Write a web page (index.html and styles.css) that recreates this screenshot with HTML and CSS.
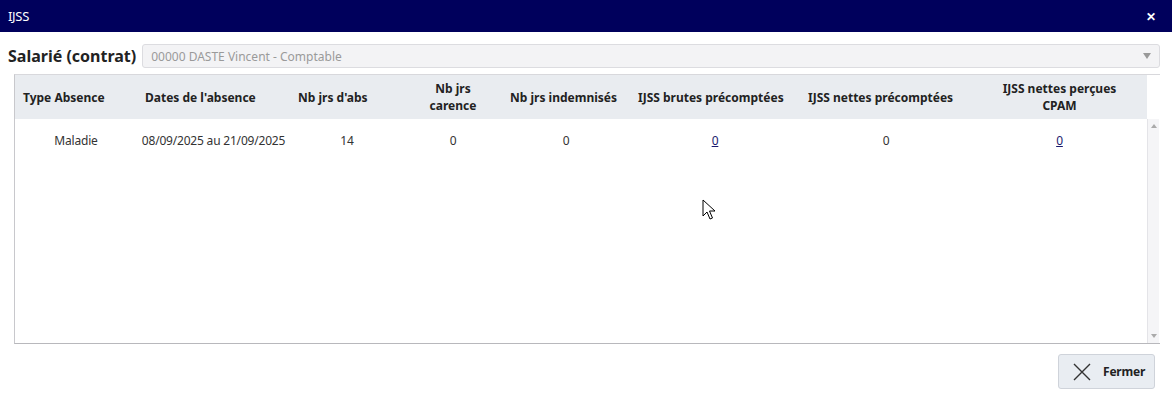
FILE: index.html
```html
<!DOCTYPE html>
<html lang="fr">
<head>
    <meta charset="UTF-8">
    <title>IJSS</title>
    <link rel="stylesheet" href="styles.css">
</head>
<body>
    <div class="dialog">
        <div class="titlebar">
            <span class="title">IJSS</span>
            <span class="close">&#x2715;</span>
        </div>

        <div class="content">
            <div class="field-row">
                <label class="field-label">Salarié (contrat)</label>
                <div class="select">
                    <span>00000 DASTE Vincent - Comptable</span>
                    <span class="select-arrow"></span>
                </div>
            </div>

            <div class="grid-frame">
                <table class="grid">
                    <colgroup>
                        <col style="width: 122px">
                        <col style="width: 153px">
                        <col style="width: 114px">
                        <col style="width: 98px">
                        <col style="width: 128px">
                        <col style="width: 170px">
                        <col style="width: 172px">
                        <col style="width: 175px">
                    </colgroup>
                    <thead>
                        <tr>
                            <th>Type Absence</th>
                            <th>Dates de l'absence</th>
                            <th>Nb jrs d'abs</th>
                            <th class="center">Nb jrs<br>carence</th>
                            <th>Nb jrs indemnisés</th>
                            <th>IJSS brutes précomptées</th>
                            <th>IJSS nettes précomptées</th>
                            <th class="center">IJSS nettes perçues<br>CPAM</th>
                        </tr>
                    </thead>
                    <tbody>
                        <tr>
                            <td>Maladie</td>
                            <td>08/09/2025 au 21/09/2025</td>
                            <td>14</td>
                            <td>0</td>
                            <td>0</td>
                            <td><a href="#">0</a></td>
                            <td>0</td>
                            <td><a href="#">0</a></td>
                        </tr>
                    </tbody>
                </table>
                <div class="scrollbar">
                    <span class="arrow-up"></span>
                    <span class="arrow-down"></span>
                </div>
            </div>

            <div class="actions">
                <button class="btn">
                    <svg width="18" height="18" viewBox="0 0 18 18">
                        <path d="M1 1 L17 17 M17 1 L1 17" stroke="#333" stroke-width="1.4" fill="none"/>
                    </svg>
                    <span>Fermer</span>
                </button>
            </div>
        </div>

        <svg class="cursor" width="14" height="22" viewBox="0 0 14 22">
            <path d="M1 1 L1 17 L5 13 L8 20 L10.5 19 L7.5 12 L13 12 Z" fill="#fff" stroke="#000" stroke-width="1"/>
        </svg>
    </div>
</body>
</html>
```

FILE: styles.css
```css
* {
    margin: 0;
    padding: 0;
    box-sizing: border-box;
}

body {
    font-family: 'Noto Sans', 'Segoe UI', sans-serif;
    background: #fff;
    color: #333;
    width: 1172px;
    height: 404px;
    overflow: hidden;
}

.dialog {
    position: relative;
    height: 404px;
}

.titlebar {
    height: 32px;
    background: #00005c;
    color: #fff;
    display: flex;
    align-items: center;
    justify-content: space-between;
    padding: 0 16px 0 8px;
}

.title {
    font-size: 13px;
    letter-spacing: -0.3px;
}

.close {
    font-size: 12px;
    font-weight: 700;
}

.content {
    padding: 12px 12px 0 8px;
}

.field-row {
    display: flex;
    align-items: center;
    gap: 6px;
    height: 24px;
}

.field-label {
    font-size: 16px;
    font-weight: 700;
    color: #222;
    white-space: nowrap;
}

.select {
    flex: 1;
    height: 24px;
    background: #f3f3f5;
    border: 1px solid #dcdce0;
    border-radius: 3px;
    display: flex;
    align-items: center;
    justify-content: space-between;
    padding: 0 8px;
    font-size: 12px;
    color: #9a9a9a;
}

.select-arrow {
    width: 0;
    height: 0;
    border-left: 4px solid transparent;
    border-right: 4px solid transparent;
    border-top: 6px solid #999;
}

.grid-frame {
    margin: 6px 0 0 6px;
    height: 270px;
    border-top: 1px solid #d8d8dc;
    border-left: 1px solid #c8c8cc;
    border-bottom: 1px solid #b8b8bc;
    position: relative;
    display: flex;
}

.grid {
    border-collapse: collapse;
    table-layout: fixed;
    width: 1132px;
    align-self: flex-start;
}

.grid th {
    height: 44px;
    background: #e9ecf0;
    font-size: 12px;
    font-weight: 700;
    color: #222;
    text-align: left;
    padding: 0 4px 0 8px;
    line-height: 17px;
    white-space: nowrap;
}

.grid th.center {
    text-align: center;
    padding: 0;
}

.grid td {
    height: 42px;
    font-size: 12px;
    color: #333;
    text-align: center;
    letter-spacing: -0.2px;
}

.grid a {
    color: #1a1a6e;
}

.scrollbar {
    width: 12px;
    margin-top: 44px;
    background: #f5f5f7;
    border-left: 1px solid #e4e4e8;
    position: relative;
    height: 224px;
}

.scrollbar .arrow-up,
.scrollbar .arrow-down {
    position: absolute;
    left: 3px;
    width: 0;
    height: 0;
    border-left: 3px solid transparent;
    border-right: 3px solid transparent;
}

.arrow-up {
    top: 5px;
    border-bottom: 4px solid #aaa;
}

.arrow-down {
    bottom: 5px;
    border-top: 4px solid #aaa;
}

.actions {
    display: flex;
    justify-content: flex-end;
    padding: 10px 5px 0 0;
}

.btn {
    width: 97px;
    height: 35px;
    background: #e9edf2;
    border: 1px solid #cfd3da;
    border-radius: 3px;
    display: flex;
    align-items: center;
    gap: 12px;
    padding-left: 14px;
    font-family: inherit;
    font-size: 12px;
    font-weight: 700;
    color: #222;
    letter-spacing: -0.2px;
}

.cursor {
    position: absolute;
    left: 702px;
    top: 199px;
}
```
